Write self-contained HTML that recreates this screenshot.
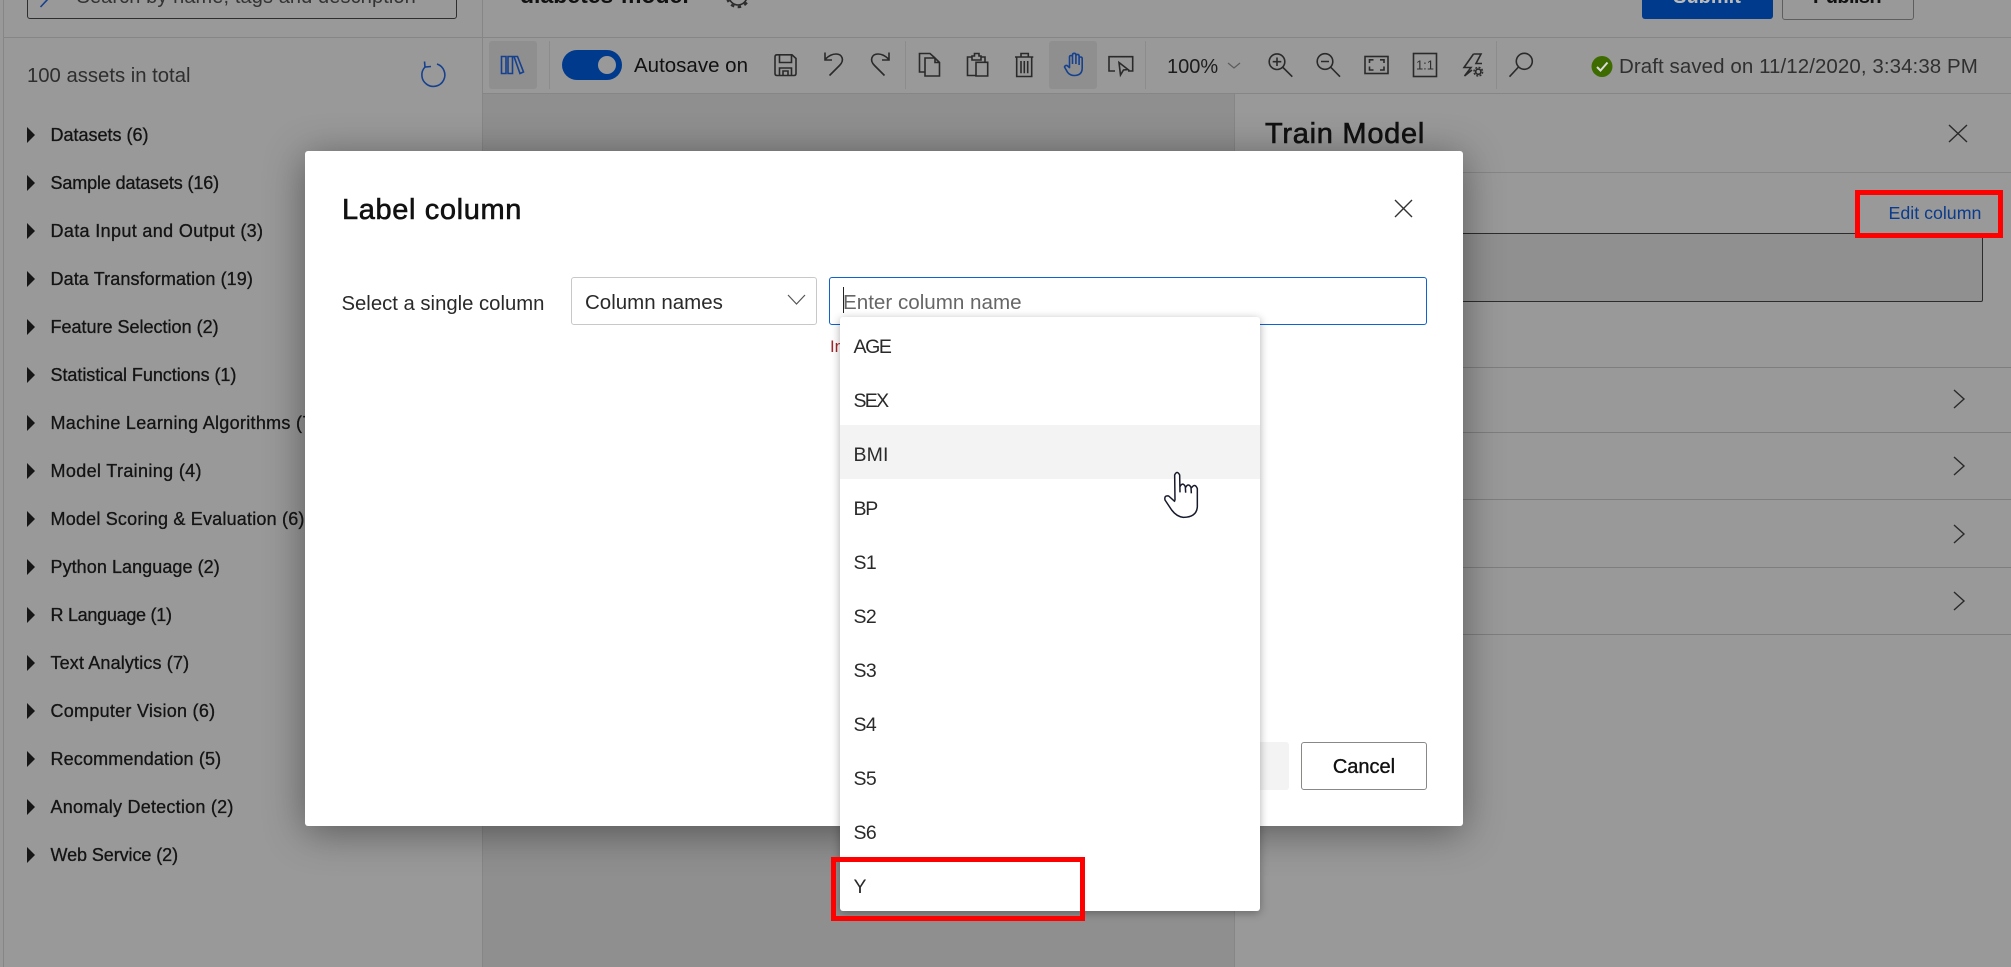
<!DOCTYPE html>
<html><head><meta charset="utf-8"><title>Label column</title>
<style>
html,body{margin:0;padding:0}
body{width:2011px;height:967px;overflow:hidden;position:relative;background:#999;font-family:"Liberation Sans",sans-serif;color:#1a1a1a}
.a{position:absolute}
.t{position:absolute;white-space:nowrap;line-height:40px;height:40px}
.bg{left:0;top:0}
.nav .t{left:50.500px;font-size:18px;color:#141414;-webkit-text-stroke:.3px #141414}
.tri{position:absolute;left:27px;width:0;height:0;border-left:8px solid #161616;border-top:8px solid transparent;border-bottom:8px solid transparent}
.line{position:absolute;background:#868686}
.ico{fill:none;stroke:#2a2a2a;stroke-width:1.600}
.blue{fill:none;stroke:#16418f;stroke-width:1.600}
.opt{position:absolute;left:0;width:420px;height:54px}
.opt span{position:absolute;left:13.500px;top:10px;line-height:40px;font-size:19.500px;color:#2a2a2a;white-space:nowrap}
.red{position:absolute;border:5px solid #ff0000;box-sizing:border-box;z-index:30}
</style></head><body>

<!-- frame -->
<div class="line" style="left:3px;top:0;width:1px;height:967px"></div>
<div class="line" style="left:482px;top:0;width:1px;height:967px"></div>
<div class="line" style="left:3px;top:37px;width:2008px;height:1px"></div>
<div class="a" style="left:483px;top:94px;width:751px;height:873px;background:#8f8f8f"></div>
<div class="line" style="left:483px;top:93px;width:1528px;height:1px"></div>
<div class="line" style="left:1234px;top:94px;width:1px;height:873px"></div>

<!-- top strip -->
<div class="a" style="left:27px;top:-20px;width:428px;height:37px;border:1px solid #2e2e2e;border-radius:3px"></div>
<div class="t" style="left:76.500px;top:-23.500px;font-size:20px;color:#333;letter-spacing:.1px">Search by name, tags and description</div>
<div class="t" style="left:520px;top:-25px;font-size:23px;font-weight:bold;color:#111">diabetes-model</div>
<div class="a" style="left:1642px;top:-20px;width:130.500px;height:39px;background:#003a8c;border-radius:3px"></div>
<div class="t" style="left:1642px;width:130px;text-align:center;top:-23.500px;font-size:20px;font-weight:bold;color:#bbb">Submit</div>
<div class="a" style="left:1781.500px;top:-20px;width:130px;height:38px;border:1px solid #5e5e5e;border-radius:3px"></div>
<div class="t" style="left:1781px;width:132px;text-align:center;top:-23.500px;font-size:20px;font-weight:bold;letter-spacing:-.6px;color:#111">Publish</div>

<!-- toolbar backgrounds -->
<div class="a" style="left:489px;top:41px;width:48px;height:48px;background:#8f8f8f;border-radius:3px"></div>
<div class="a" style="left:1049px;top:41px;width:48px;height:48px;background:#8f8f8f;border-radius:3px"></div>
<div class="line" style="left:549px;top:41px;width:1px;height:48px;background:#8c8c8c"></div>
<div class="line" style="left:905px;top:41px;width:1px;height:48px;background:#8c8c8c"></div>
<div class="line" style="left:1145px;top:41px;width:1px;height:48px;background:#8c8c8c"></div>
<div class="line" style="left:1496px;top:41px;width:1px;height:48px;background:#8c8c8c"></div>
<div class="a" style="left:562px;top:50px;width:60px;height:30px;border-radius:15px;background:#003a8c"></div>
<div class="a" style="left:598px;top:56px;width:18px;height:18px;border-radius:50%;background:#999"></div>
<div class="t" style="left:634px;top:46px;font-size:20.500px;color:#111">Autosave on</div>
<div class="t" style="left:1167px;top:47px;font-size:20px;color:#1c1c1c">100%</div>
<div class="t" style="left:1619px;top:47px;font-size:20.500px;letter-spacing:.07px;color:#303030">Draft saved on 11/12/2020, 3:34:38 PM</div>

<!-- icon layer -->
<svg class="a bg" width="2011" height="967" viewBox="0 0 2011 967">
  <!-- gear -->
  <circle cx="738" cy="-4" r="9" class="ico"/>
  <circle cx="738" cy="-4" r="11" fill="none" stroke="#2e2e2e" stroke-width="2.500" stroke-dasharray="3.500 3.500"/>
  <!-- search handle -->
  <path d="M40.500 7 L48 -1" class="blue"/>
  <!-- refresh -->
  <path d="M437 64 A11.500 11.500 0 1 1 425 67" class="blue"/>
  <path d="M424.500 61.500 L425 67 L431 66.500" class="blue"/>
  <!-- library -->
  <path d="M501.500 56.500h4.500v17h-4.500z M508 56.500h4.500v17H508z M514 56.500 h3.500 L523.500 72 L520 73.500 Z" class="blue"/>
  <!-- save -->
  <path d="M777 54.800 H792 L796 58.500 V73.500 Q796 75.500 794 75.500 H777 Q775 75.500 775 73.500 V56.800 Q775 54.800 777 54.800 Z M779.500 55 V62.500 H791.500 V55.500 M779.500 75.500 V68 H791.500 V75.500 M783 75.500 V71 H788 V75.500" class="ico"/>
  <!-- undo / redo -->
  <path d="M829.500 75.500 L839.500 65.500 C845 60 842 54 836 54 C832 54 829 55.500 825.500 59 M825 52.500 V60 H832" class="ico"/>
  <path d="M884.500 75.500 L874.500 65.500 C869 60 872 54 878 54 C882 54 885 55.500 888.500 59 M889 52.500 V60 H882" class="ico"/>
  <!-- copy -->
  <path d="M925 72 H919.500 V53.500 H930 L935 58 M925 58 H935 L939.500 62.500 V76 H925 Z M935 58 V62.500 H939.500" class="ico"/>
  <!-- paste -->
  <path d="M976 75.500 H967.500 V57 H972 M981 57 H985 V62.300 M972 60 V56 H974.500 V53.500 H979 V56 H981 V60 Z M976 62.300 H987.700 V76 H976 Z" class="ico"/>
  <!-- delete -->
  <path d="M1015 57 H1033.300 M1021 57 V53.500 H1028.300 V57 M1016.700 57 V76.500 H1031.700 V57 M1021 61 V73.300 M1024.300 61 V73.300 M1027.700 61 V73.300" class="ico"/>
  <!-- hand -->
  <path d="M1069.500 67 V57 q0-1.500 1.500-1.500 t1.500 1.500 V64 M1072.500 64 V55 q0-1.700 1.700-1.700 t1.700 1.700 V64 M1075.900 64 V56 q0-1.600 1.600-1.600 t1.600 1.600 V65 M1079.100 65 V58.500 q0-1.500 1.500-1.500 t1.600 1.500 V68 q0 7.500-8 7.500 q-4 0-6.500-3 L1064.500 67 q.5-2 2.500-1.500 l3 2.500" class="blue"/>
  <!-- select -->
  <path d="M1115 71 H1109 V56.700 H1132.700 V71 H1128 M1119 62.500 L1128 69.500 L1123.500 70 L1120.500 75 Z" class="ico"/>
  <!-- zoom dropdown chevron -->
  <path d="M1228 63 L1234 68 L1240 63" fill="none" stroke="#5c5c5c" stroke-width="1.200"/>
  <!-- zoom in/out -->
  <circle cx="1277" cy="61.700" r="7.800" class="ico"/>
  <path d="M1282.500 67 L1292.300 76.700 M1272.700 61.700 H1281.300 M1277 57.500 V66" class="ico"/>
  <circle cx="1325" cy="61.500" r="7.800" class="ico"/>
  <path d="M1330.500 67 L1340 76.700 M1321 61.500 H1329" class="ico"/>
  <!-- fit -->
  <rect x="1365" y="56.500" width="23" height="17" class="ico"/>
  <path d="M1369.500 63 V59.800 H1373.500 M1380 59.800 H1384 V63 M1384 66.500 V70 H1380 M1373.500 70 H1369.500 V66.500" class="ico"/>
  <!-- 1:1 -->
  <rect x="1413.500" y="53.500" width="23" height="23" class="ico"/>
  <text x="1425" y="69.500" text-anchor="middle" font-size="13" fill="#2e2e2e" font-family="Liberation Sans, sans-serif">1:1</text>
  <!-- lightning -->
  <path d="M1473.500 54 H1481 L1476 63.500 H1482 M1473.500 54 L1464 67.500 H1471 L1464.500 76 L1472 70" class="ico"/>
  <circle cx="1478.300" cy="71.700" r="2.600" class="ico"/>
  <circle cx="1478.300" cy="71.700" r="4.300" fill="none" stroke="#2e2e2e" stroke-width="1.500" stroke-dasharray="2 1.400"/>
  <!-- search -->
  <circle cx="1524.300" cy="61.300" r="8" class="ico"/>
  <path d="M1518.500 67 L1509.500 76.700" class="ico"/>
  <!-- status -->
  <circle cx="1602" cy="66.500" r="10.500" fill="#3d6b00"/>
  <path d="M1597 67 L1600.500 70.500 L1607.500 62.500" fill="none" stroke="#dcdcdc" stroke-width="2"/>
  <!-- panel icons -->
  <path d="M1949 125 L1967 142 M1967 125 L1949 142" class="ico" style="stroke-width:1.400"/>
  <path d="M1954 390 L1964 399 L1954 408 M1954 457 L1964 466 L1954 475 M1954 525 L1964 534 L1954 543 M1954 592 L1964 601 L1954 610" class="ico" style="stroke-width:1.400"/>
</svg>

<!-- sidebar -->
<div class="t" style="left:27px;top:56px;font-size:20.300px;color:#2e2e2e">100 assets in total</div>
<div class="nav">
<i class="tri" style="top:127px"></i><div class="t" style="top:115px">Datasets (6)</div>
<i class="tri" style="top:175px"></i><div class="t" style="top:163px;letter-spacing:-.13px">Sample datasets (16)</div>
<i class="tri" style="top:223px"></i><div class="t" style="top:211px;letter-spacing:.35px">Data Input and Output (3)</div>
<i class="tri" style="top:271px"></i><div class="t" style="top:259px;letter-spacing:.1px">Data Transformation (19)</div>
<i class="tri" style="top:319px"></i><div class="t" style="top:307px">Feature Selection (2)</div>
<i class="tri" style="top:367px"></i><div class="t" style="top:355px;letter-spacing:-.05px">Statistical Functions (1)</div>
<i class="tri" style="top:415px"></i><div class="t" style="top:403px;letter-spacing:.3px">Machine Learning Algorithms (7)</div>
<i class="tri" style="top:463px"></i><div class="t" style="top:451px;letter-spacing:.35px">Model Training (4)</div>
<i class="tri" style="top:511px"></i><div class="t" style="top:499px;letter-spacing:.2px">Model Scoring &amp; Evaluation (6)</div>
<i class="tri" style="top:559px"></i><div class="t" style="top:547px;letter-spacing:.06px">Python Language (2)</div>
<i class="tri" style="top:607px"></i><div class="t" style="top:595px;letter-spacing:-.28px">R Language (1)</div>
<i class="tri" style="top:655px"></i><div class="t" style="top:643px;letter-spacing:.15px">Text Analytics (7)</div>
<i class="tri" style="top:703px"></i><div class="t" style="top:691px;letter-spacing:.27px">Computer Vision (6)</div>
<i class="tri" style="top:751px"></i><div class="t" style="top:739px;letter-spacing:.15px">Recommendation (5)</div>
<i class="tri" style="top:799px"></i><div class="t" style="top:787px;letter-spacing:.24px">Anomaly Detection (2)</div>
<i class="tri" style="top:847px"></i><div class="t" style="top:835px;letter-spacing:-.08px">Web Service (2)</div>
</div>

<!-- right panel -->
<div class="t" style="left:1265px;top:114px;font-size:29px;letter-spacing:.73px;color:#111;-webkit-text-stroke:.6px #111">Train Model</div>
<div class="line" style="left:1235px;top:172px;width:776px;height:1px"></div>
<div class="t" style="left:1888.500px;top:193px;font-size:17.800px;color:#0b3b8c">Edit column</div>
<div class="a" style="left:1300px;top:233px;width:681px;height:67px;background:#909090;border:1px solid #2c2c2c;border-radius:2px"></div>
<div class="line" style="left:1235px;top:367px;width:776px;height:1px;background:#7e7e7e"></div>
<div class="line" style="left:1235px;top:432px;width:776px;height:1px;background:#7e7e7e"></div>
<div class="line" style="left:1235px;top:499px;width:776px;height:1px;background:#7e7e7e"></div>
<div class="line" style="left:1235px;top:567px;width:776px;height:1px;background:#7e7e7e"></div>
<div class="line" style="left:1235px;top:634px;width:776px;height:1px;background:#7e7e7e"></div>

<!-- modal -->
<div class="a" style="left:305px;top:151px;width:1158px;height:675px;background:#fff;border-radius:3px;box-shadow:0 6px 40px rgba(0,0,0,.42);z-index:10">
  <div class="t" style="left:37px;top:39px;font-size:29px;letter-spacing:.63px;color:#111;-webkit-text-stroke:.6px #111">Label column</div>
  <svg class="a" style="left:1089px;top:48px" width="20" height="20" viewBox="0 0 20 20"><path d="M1 1 L18 18 M18 1 L1 18" fill="none" stroke="#333" stroke-width="1.400"/></svg>
  <div class="t" style="left:36.500px;top:133px;font-size:20.300px;color:#2a2a2a">Select a single column</div>

  <div class="a" style="left:266px;top:126px;width:244px;height:46px;border:1px solid #c8c8c8;border-radius:3px"></div>
  <div class="t" style="left:280px;top:132px;font-size:20.500px;color:#2a2a2a">Column names</div>
  <svg class="a" style="left:482px;top:143px" width="20" height="12" viewBox="0 0 20 12"><path d="M1 1 L9.500 10 L18 1" fill="none" stroke="#555" stroke-width="1.200"/></svg>

  <div class="a" style="left:524px;top:126px;width:596px;height:46px;border:1.500px solid #0f62d0;border-radius:3px"></div>
  <div class="a" style="left:538px;top:136px;width:1px;height:26px;background:#222"></div>
  <div class="t" style="left:538px;top:132px;font-size:20.600px;color:#666">Enter column name</div>
  <div class="t" style="left:525px;top:176px;font-size:16.700px;color:#a4262c">Invalid column name</div>

  <div class="a" style="left:897px;top:591px;width:87px;height:48px;background:#f3f3f3;border-radius:3px"></div>
  <div class="a" style="left:996px;top:591px;width:124px;height:46px;border:1px solid #8a8886;border-radius:3px"></div>
  <div class="t" style="left:996px;width:126px;text-align:center;top:596px;font-size:20px;color:#111;-webkit-text-stroke:.35px #111">Cancel</div>
</div>

<!-- dropdown list -->
<div class="a" style="left:840px;top:317px;width:420px;height:594px;background:#fff;border-radius:3px;box-shadow:0 2px 9px rgba(0,0,0,.32);z-index:20">
  <div class="opt" style="top:0"><span style="letter-spacing:-1.400px">AGE</span></div>
  <div class="opt" style="top:54px"><span style="letter-spacing:-1.700px">SEX</span></div>
  <div class="opt" style="top:108px;background:#f3f3f3"><span style="letter-spacing:.1px">BMI</span></div>
  <div class="opt" style="top:162px"><span style="letter-spacing:-1.200px">BP</span></div>
  <div class="opt" style="top:216px"><span style="letter-spacing:-.6px">S1</span></div>
  <div class="opt" style="top:270px"><span style="letter-spacing:-.6px">S2</span></div>
  <div class="opt" style="top:324px"><span style="letter-spacing:-.6px">S3</span></div>
  <div class="opt" style="top:378px"><span style="letter-spacing:-.6px">S4</span></div>
  <div class="opt" style="top:432px"><span style="letter-spacing:-.6px">S5</span></div>
  <div class="opt" style="top:486px"><span style="letter-spacing:-.6px">S6</span></div>
  <div class="opt" style="top:540px"><span>Y</span></div>
</div>

<!-- hand cursor -->
<svg class="a" style="left:1162px;top:470px;z-index:25" width="38" height="50" viewBox="1086 630 114 150">
  <path d="M1125 722 L1124 645 Q1131 630 1139 645 L1140 697 M1140 680 Q1148 665 1156 680 L1157 698 M1157 682 Q1165 668 1173 682 L1174 700 M1174 684 Q1185 668 1192 686 L1192 740 Q1190 772 1150 772 Q1130 770 1115 750 L1095 720 Q1092 705 1106 708 L1125 725" fill="#fff" stroke="#161a2b" stroke-width="4.500" stroke-linejoin="round"/>
</svg>

<!-- annotations -->
<div class="red" style="left:1855px;top:190px;width:148px;height:48px"></div>
<div class="red" style="left:831px;top:857px;width:254px;height:64px"></div>

</body></html>
